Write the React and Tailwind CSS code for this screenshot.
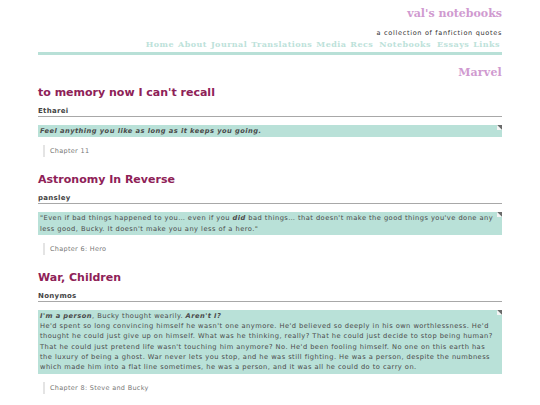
import React from "react";

const serif = { fontFamily: '"DejaVu Serif", Georgia, serif' };

function Corner() {
  return (
    <svg className="absolute right-0 top-0" width="5" height="5" viewBox="0 0 5 5">
      <polygon points="0,0 5,0 5,5" fill="#6b6b6b" />
      <polygon points="0,0 5,5 0,5" fill="#f4f4f4" />
    </svg>
  );
}

function Entry({ title, author, lines, chapter }) {
  return (
    <div className="mb-[16px]">
      <h2 className="text-[11px] font-bold leading-[14px] text-[#8e2157]">{title}</h2>
      <div className="mt-[7px] border-b border-[#a8a8a8] text-[7px] font-bold leading-[9px] tracking-[0.3px] text-[#444]">{author}</div>
      <div className="relative mt-[8px] bg-[#b9e1d8] px-[2px] py-[1px] text-[6.7px] leading-[10.3px] tracking-[0.45px] text-[#4a4a4a]">
        <Corner />
        {lines.map((l, i) => (
          <div key={i} className="whitespace-nowrap">{l}</div>
        ))}
      </div>
      <div className="ml-[5px] mt-[8px] border-l-2 border-[#e4e4e4] pl-[5px] text-[6.5px] leading-[12px] tracking-[0.3px] text-[#777]">{chapter}</div>
    </div>
  );
}

export default function App() {
  return (
    <div className="min-h-[405px] w-[540px] overflow-hidden bg-white" style={{ fontFamily: '"DejaVu Sans", Verdana, sans-serif' }}>
      <div className="mx-[38px] pt-[7px]">
        <div className="text-right text-[11px] font-bold leading-[14px] text-[#d09ad0]" style={serif}>val's notebooks</div>
        <div className="mt-[8px] text-right text-[6.5px] leading-[8px] tracking-[0.7px] text-[#333]">a collection of fanfiction quotes</div>
        <div className="mt-[2px] flex justify-end gap-[4px] pr-[2px] text-[8px] font-bold leading-[10px] tracking-[0.45px] text-[#bde2da]" style={serif}>
          <span>Home</span>
          <span>About</span>
          <span>Journal</span>
          <span>Translations</span>
          <span>Media</span>
          <span>Recs</span>
          <span className="ml-[2px]">Notebooks</span>
          <span className="ml-[2px]">Essays</span>
          <span>Links</span>
        </div>
        <div className="mt-[3px] h-[3px] bg-[#b8e0d7]"></div>
        <div className="mt-[11px] text-right text-[11px] font-bold leading-[14px] tracking-[0.2px] text-[#d09ad0]" style={serif}>Marvel</div>
        <div className="mt-[6px]">
          <Entry
            title="to memory now I can't recall"
            author="Etharei"
            chapter="Chapter 11"
            lines={[
              <b key="a"><i>Feel anything you like as long as it keeps you going.</i></b>,
            ]}
          />
          <Entry
            title="Astronomy In Reverse"
            author="pansley"
            chapter="Chapter 6: Hero"
            lines={[
              <>"Even if bad things happened to you… even if you <b><i>did</i></b> bad things… that doesn't make the good things you've done any</>,
              <>less good, Bucky. It doesn't make you any less of a hero."</>,
            ]}
          />
          <Entry
            title="War, Children"
            author="Nonymos"
            chapter="Chapter 8: Steve and Bucky"
            lines={[
              <><b><i>I'm a person</i></b>, Bucky thought wearily. <b><i>Aren't I?</i></b></>,
              <>He'd spent so long convincing himself he wasn't one anymore. He'd believed so deeply in his own worthlessness. He'd</>,
              <>thought he could just give up on himself. What was he thinking, really? That he could just decide to stop being human?</>,
              <>That he could just pretend life wasn't touching him anymore? No. He'd been fooling himself. No one on this earth has</>,
              <>the luxury of being a ghost. War never lets you stop, and he was still fighting. He was a person, despite the numbness</>,
              <>which made him into a flat line sometimes, he was a person, and it was all he could do to carry on.</>,
            ]}
          />
        </div>
      </div>
    </div>
  );
}
